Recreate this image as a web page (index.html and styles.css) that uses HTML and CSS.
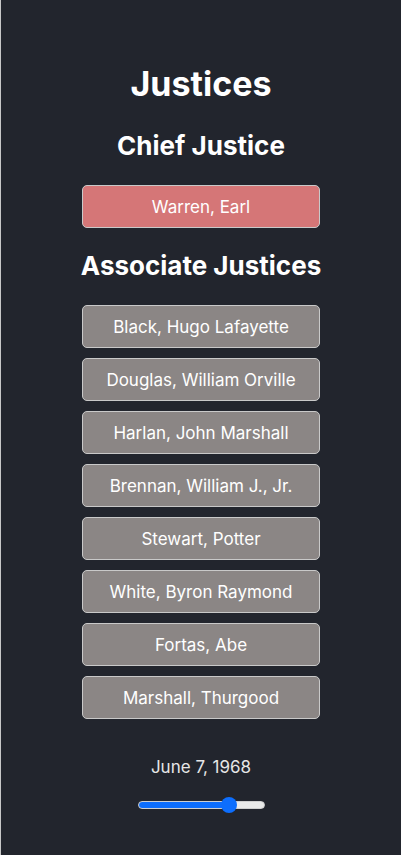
FILE: index.html
```html
<!DOCTYPE html>
<html>
<head>
<meta charset="utf-8">
<link rel="stylesheet" href="styles.css">
</head>
<body>
<div class="app">
  <h1 class="title">Justices</h1>
  <h2 class="section chief-title">Chief Justice</h2>
  <div class="list">
    <button class="justice chief">Warren, Earl</button>
  </div>
  <h2 class="section assoc">Associate Justices</h2>
  <div class="list">
    <button class="justice">Black, Hugo Lafayette</button>
    <button class="justice">Douglas, William Orville</button>
    <button class="justice">Harlan, John Marshall</button>
    <button class="justice">Brennan, William J., Jr.</button>
    <button class="justice">Stewart, Potter</button>
    <button class="justice">White, Byron Raymond</button>
    <button class="justice">Fortas, Abe</button>
    <button class="justice">Marshall, Thurgood</button>
  </div>
  <div class="date">June 7, 1968</div>
  <input class="slider" type="range" min="0" max="100" value="76">
</div>
</body>
</html>
```
FILE: styles.css
```css
html, body {
  margin: 0;
  padding: 0;
  background: #22252d;
}
body {
  font-family: Inter, "Noto Sans", sans-serif;
  color: #ffffff;
}
.app {
  min-height: 855px;
  box-sizing: border-box;
  border-left: 1px solid #c8c8c8;
  display: flex;
  flex-direction: column;
  align-items: center;
  padding-top: 64px;
}
.title {
  font-size: 34px;
  font-weight: 700;
  margin: 0;
  line-height: 40px;
}
.section {
  font-size: 26px;
  font-weight: 700;
  line-height: 32px;
  margin: 0;
}
.chief-title {
  margin-top: 26px;
}
.assoc {
  margin-top: 22px;
}
.list {
  display: flex;
  flex-direction: column;
  gap: 10px;
  margin-top: 23px;
}
.justice {
  width: 238px;
  height: 43px;
  box-sizing: border-box;
  border: 1px solid #c9c9c9;
  border-radius: 5px;
  background: #8b8685;
  color: #ffffff;
  font-family: Inter, "Noto Sans", sans-serif;
  font-size: 17px;
  padding: 0;
}
.chief {
  background: #d57677;
}
.date {
  margin-top: 37px;
  font-size: 17px;
  color: #e6e6e6;
  line-height: 22px;
}
.slider {
  -webkit-appearance: none;
  appearance: none;
  width: 127px;
  height: 8px;
  margin: 23px 0 0;
  border-radius: 4px;
  background: linear-gradient(to right, #0d6efd 0, #0d6efd 73%, #e9e9e9 73%, #e9e9e9 100%);
  border: 1px solid #cfcfcf;
  box-sizing: border-box;
}
.slider::-webkit-slider-thumb {
  -webkit-appearance: none;
  appearance: none;
  width: 16px;
  height: 16px;
  border-radius: 50%;
  background: #0d6efd;
  border: none;
}
```
